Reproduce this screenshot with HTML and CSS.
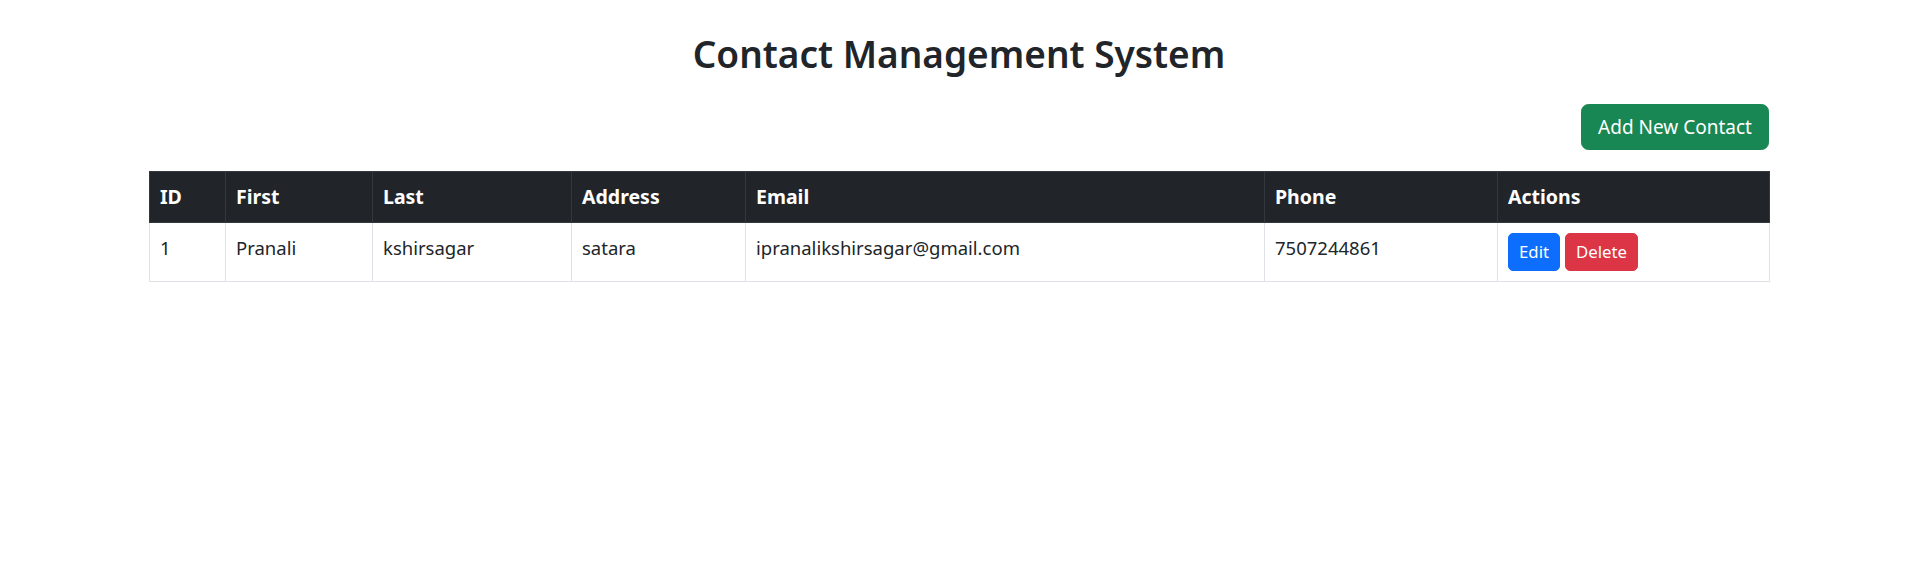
FILE: index.html
```html
<!DOCTYPE html>
<html lang="en">
<head>
<meta charset="utf-8">
<title>Contact Management System</title>
<link rel="stylesheet" href="styles.css">
</head>
<body>
<div class="container">
  <h2 class="title">Contact Management System</h2>
  <div class="toolbar">
    <button class="btn btn-success">Add New Contact</button>
  </div>
  <table class="table">
    <thead>
      <tr>
        <th class="c-id">ID</th>
        <th class="c-first">First</th>
        <th class="c-last">Last</th>
        <th class="c-address">Address</th>
        <th class="c-email">Email</th>
        <th class="c-phone">Phone</th>
        <th class="c-actions">Actions</th>
      </tr>
    </thead>
    <tbody>
      <tr>
        <td>1</td>
        <td>Pranali</td>
        <td>kshirsagar</td>
        <td>satara</td>
        <td>ipranalikshirsagar@gmail.com</td>
        <td>7507244861</td>
        <td class="actions">
          <button class="btn btn-sm btn-primary">Edit</button><button class="btn btn-sm btn-danger">Delete</button>
        </td>
      </tr>
    </tbody>
  </table>
</div>
</body>
</html>
```

FILE: styles.css
```css
* { box-sizing: border-box; }
html, body { margin: 0; padding: 0; background: #fff; }
body {
  font-family: "Noto Sans", "Open Sans", "Liberation Sans", sans-serif;
  font-size: 18.5px;
  line-height: 30px;
  color: #212529;
}
.container {
  width: 1650px;
  margin: 0 auto;
  padding: 30px 15px 0;
}
.title {
  margin: 0;
  text-align: center;
  font-size: 37px;
  font-weight: 600;
  line-height: 47px;
}
.toolbar {
  display: flex;
  justify-content: flex-end;
  margin-top: 27px;
  margin-bottom: 21px;
}
.btn {
  font-family: inherit;
  font-size: 19px;
  line-height: 30px;
  padding: 7px 15px;
  border: 1px solid transparent;
  border-radius: 7.5px;
  color: #fff;
  cursor: pointer;
}
.btn-success { background: #198754; border-color: #198754; width: 188px; height: 46px; padding: 0; }
.btn-sm {
  font-size: 16.8px;
  line-height: 26px;
  padding: 5px 10px;
  border-radius: 5px;
  height: 38px;
  vertical-align: top;
}
.btn-primary { background: #0d6efd; border-color: #0d6efd; }
.btn-danger { background: #dc3545; border-color: #dc3545; margin-left: 5px; }
.table {
  width: 1620px;
  border-collapse: collapse;
  table-layout: fixed;
}
.table th, .table td {
  text-align: left;
  vertical-align: top;
  padding: 10px;
  border: 1px solid #dee2e6;
}
.table thead th {
  background: #212529;
  color: #fff;
  font-size: 19.5px;
  font-weight: 700;
  border-color: #32383e;
  height: 51px;
}
.table tbody td { height: 58px; }
.c-id { width: 76px; }
.c-first { width: 147px; }
.c-last { width: 199px; }
.c-address { width: 174px; }
.c-email { width: 519px; }
.c-phone { width: 233px; }
.c-actions { width: 272px; }
```
